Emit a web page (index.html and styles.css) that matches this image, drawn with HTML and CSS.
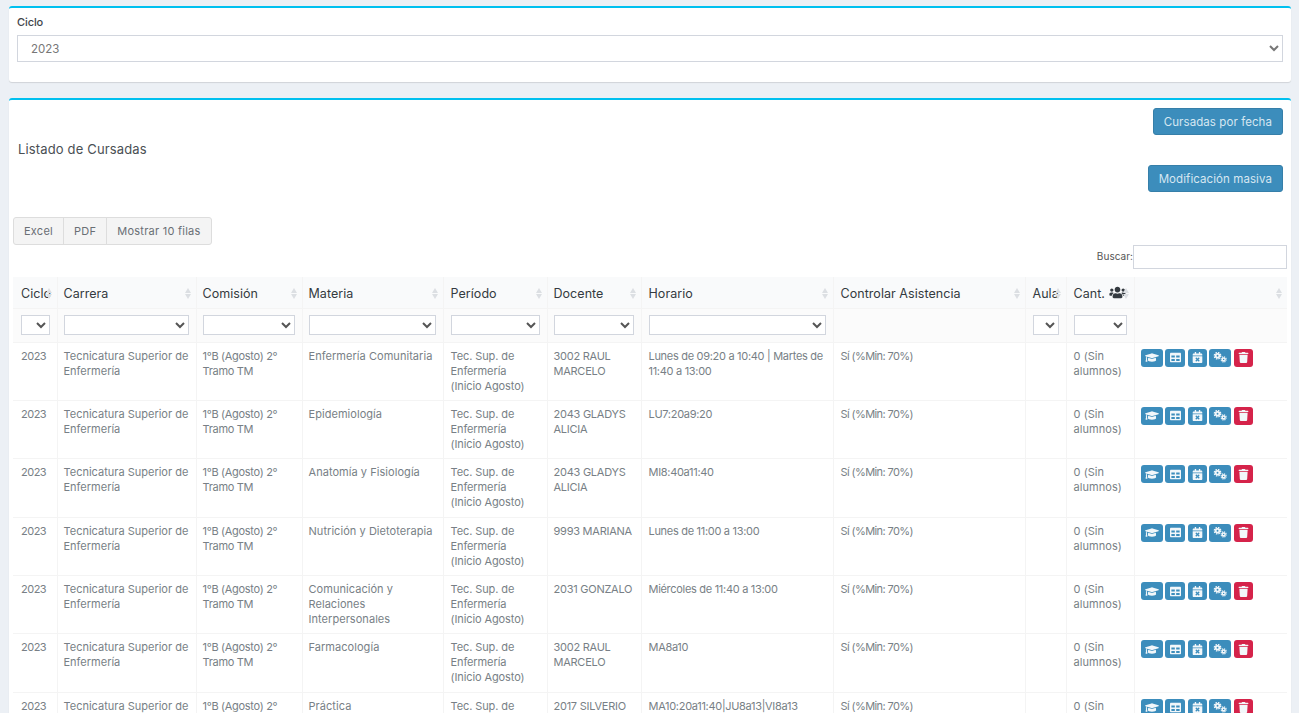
FILE: index.html
```html
<!DOCTYPE html>
<html lang="es">
<head>
<meta charset="utf-8">
<title>Listado de Cursadas</title>
<link rel="stylesheet" href="styles.css">
</head>
<body>
<svg class="defs" width="0" height="0" aria-hidden="true">
  <symbol id="i-cap" viewBox="0 0 640 512"><path d="M622.34 153.2L343.4 67.5c-15.2-4.67-31.6-4.67-46.79 0L17.66 153.2c-23.54 7.23-23.54 38.36 0 45.59l48.63 14.94c-10.67 13.19-17.23 29.28-17.88 46.9C38.78 266.15 32 276.11 32 288c0 10.78 5.68 19.85 13.86 25.65L20.33 428.53C18.11 438.52 25.71 448 35.94 448h56.11c10.24 0 17.84-9.48 15.62-19.47L82.14 313.65C90.32 307.85 96 298.78 96 288c0-11.57-6.47-21.25-15.66-26.87.76-15.02 8.44-28.3 20.69-36.72L296.6 284.5c9.06 2.78 26.44 6.25 46.79 0l278.95-85.7c23.55-7.24 23.55-38.36 0-45.6zM352.79 315.09c-28.53 8.76-52.84 3.92-65.59 0l-145.02-44.55L128 384c0 35.35 85.96 64 192 64s192-28.65 192-64l-14.18-113.47-145.03 44.56z"/></symbol>
  <symbol id="i-table" viewBox="0 0 512 512"><path d="M464 32H48C21.49 32 0 53.49 0 80v352c0 26.51 21.49 48 48 48h416c26.51 0 48-21.49 48-48V80c0-26.51-21.49-48-48-48zM224 416H64v-96h160v96zm0-160H64v-96h160v96zm224 160H288v-96h160v96zm0-160H288v-96h160v96z"/></symbol>
  <symbol id="i-cal" viewBox="0 0 448 512"><path d="M436 160H12c-6.6 0-12-5.4-12-12v-36c0-26.5 21.5-48 48-48h48V12c0-6.6 5.4-12 12-12h40c6.6 0 12 5.4 12 12v52h128V12c0-6.6 5.4-12 12-12h40c6.6 0 12 5.4 12 12v52h48c26.5 0 48 21.5 48 48v36c0 6.6-5.4 12-12 12zM12 192h424c6.6 0 12 5.4 12 12v260c0 26.5-21.5 48-48 48H48c-26.5 0-48-21.5-48-48V204c0-6.6 5.4-12 12-12zm257.3 160l48.1-48.1c4.7-4.7 4.7-12.3 0-17l-28.3-28.3c-4.7-4.7-12.3-4.7-17 0L224 306.7l-48.1-48.1c-4.7-4.7-12.3-4.7-17 0l-28.3 28.3c-4.7 4.7-4.7 12.3 0 17l48.1 48.1-48.1 48.1c-4.7 4.7-4.7 12.3 0 17l28.3 28.3c4.7 4.7 12.3 4.7 17 0l48.1-48.1 48.1 48.1c4.7 4.7 12.3 4.7 17 0l28.3-28.3c4.7-4.7 4.7-12.3 0-17L269.3 352z"/></symbol>
  <symbol id="i-cogs" viewBox="0 0 640 512"><g fill="none" stroke="currentColor"><circle cx="205" cy="175" r="85" stroke-width="85"/><circle cx="205" cy="175" r="150" stroke-width="60" stroke-dasharray="70 48"/><circle cx="490" cy="345" r="68" stroke-width="70"/><circle cx="490" cy="345" r="120" stroke-width="50" stroke-dasharray="55 39"/></g></symbol>
  <symbol id="i-trash" viewBox="0 0 448 512"><path d="M432 32H312l-9.4-18.7A24 24 0 0 0 281.1 0H166.8a23.72 23.72 0 0 0-21.4 13.3L136 32H16A16 16 0 0 0 0 48v32a16 16 0 0 0 16 16h416a16 16 0 0 0 16-16V48a16 16 0 0 0-16-16zM53.2 467a48 48 0 0 0 47.9 45h245.8a48 48 0 0 0 47.9-45L416 128H32z"/></symbol>
  <symbol id="i-users" viewBox="0 0 640 512"><path d="M96 224c35.3 0 64-28.7 64-64s-28.7-64-64-64-64 28.7-64 64 28.7 64 64 64zm448 0c35.3 0 64-28.7 64-64s-28.7-64-64-64-64 28.7-64 64 28.7 64 64 64zm32 32h-64c-17.6 0-33.5 7.1-45.1 18.6 40.3 22.1 68.9 62 75.1 109.4h66c17.7 0 32-14.3 32-32v-32c0-35.3-28.7-64-64-64zm-256 0c61.9 0 112-50.1 112-112S381.9 32 320 32 208 82.1 208 144s50.1 112 112 112zm76.8 32h-8.3c-20.8 10-43.9 16-68.5 16s-47.6-6-68.5-16h-8.3C179.6 288 128 339.6 128 403.2V432c0 26.5 21.5 48 48 48h288c26.5 0 48-21.5 48-48v-28.8c0-63.6-51.6-115.2-115.2-115.2zm-223.7-13.4C161.5 263.1 145.6 256 128 256H64c-35.3 0-64 28.7-64 64v32c0 17.7 14.3 32 32 32h65.9c6.3-47.4 34.9-87.3 75.2-109.4z"/></symbol>
</svg>

<main class="content">
  <section class="card card-filter">
    <label class="field-label" for="ciclo">Ciclo</label>
    <select id="ciclo" class="field-select"><option>2023</option></select>
  </section>

  <section class="card card-list">
    <div class="toolbar-row toolbar-first"><button class="btn-primary">Cursadas por fecha</button></div>
    <h3 class="list-title">Listado de Cursadas</h3>
    <div class="toolbar-row toolbar-second"><button class="btn-primary">Modificación masiva</button></div>

    <div class="dt-buttons">
      <button class="dt-btn">Excel</button><button class="dt-btn">PDF</button><button class="dt-btn">Mostrar 10 filas</button>
    </div>
    <div class="dt-search"><label class="search-label" for="buscar">Buscar:</label><input id="buscar" class="search-input" type="search"></div>

    <table class="grid">
      <colgroup>
        <col class="c-ciclo"><col class="c-carrera"><col class="c-comision"><col class="c-materia"><col class="c-periodo"><col class="c-docente"><col class="c-horario"><col class="c-control"><col class="c-aula"><col class="c-cant"><col class="c-acc">
      </colgroup>
      <thead>
        <tr class="head-row">
          <th class="sort">Ciclo</th><th class="sort">Carrera</th><th class="sort">Comisión</th><th class="sort">Materia</th><th class="sort">Período</th><th class="sort">Docente</th><th class="sort">Horario</th><th class="sort">Controlar Asistencia</th><th class="sort">Aula</th>
          <th class="sort">Cant. <svg class="users"><use href="#i-users"/></svg></th><th class="sort"></th>
        </tr>
        <tr class="filter-row">
          <th><select class="f-sel"></select></th><th><select class="f-sel"></select></th><th><select class="f-sel"></select></th><th><select class="f-sel"></select></th><th><select class="f-sel"></select></th><th><select class="f-sel"></select></th><th><select class="f-sel"></select></th><th></th><th><select class="f-sel"></select></th><th><select class="f-sel"></select></th><th></th>
        </tr>
      </thead>
      <tbody id="rows">
        <tr><td>2023</td><td>Tecnicatura Superior de Enfermería</td><td>1°B (Agosto) 2° Tramo TM</td><td>Enfermería Comunitaria</td><td>Tec. Sup. de Enfermería (Inicio Agosto)</td><td>3002 RAUL MARCELO</td><td>Lunes de 09:20 a 10:40 | Martes de 11:40 a 13:00</td><td>Sí (%Min: 70%)</td><td></td><td>0 (Sin alumnos)</td>
          <td class="acts"><a class="ab ab-cap"><svg><use href="#i-cap"/></svg></a><a class="ab ab-tab"><svg><use href="#i-table"/></svg></a><a class="ab ab-cal"><svg><use href="#i-cal"/></svg></a><a class="ab ab-cog"><svg><use href="#i-cogs"/></svg></a><a class="ab ab-del"><svg><use href="#i-trash"/></svg></a></td></tr>
        <tr><td>2023</td><td>Tecnicatura Superior de Enfermería</td><td>1°B (Agosto) 2° Tramo TM</td><td>Epidemiología</td><td>Tec. Sup. de Enfermería (Inicio Agosto)</td><td>2043 GLADYS ALICIA</td><td>LU7:20a9:20</td><td>Sí (%Min: 70%)</td><td></td><td>0 (Sin alumnos)</td>
          <td class="acts"><a class="ab ab-cap"><svg><use href="#i-cap"/></svg></a><a class="ab ab-tab"><svg><use href="#i-table"/></svg></a><a class="ab ab-cal"><svg><use href="#i-cal"/></svg></a><a class="ab ab-cog"><svg><use href="#i-cogs"/></svg></a><a class="ab ab-del"><svg><use href="#i-trash"/></svg></a></td></tr>
        <tr><td>2023</td><td>Tecnicatura Superior de Enfermería</td><td>1°B (Agosto) 2° Tramo TM</td><td>Anatomía y Fisiología</td><td>Tec. Sup. de Enfermería (Inicio Agosto)</td><td>2043 GLADYS ALICIA</td><td>MI8:40a11:40</td><td>Sí (%Min: 70%)</td><td></td><td>0 (Sin alumnos)</td>
          <td class="acts"><a class="ab ab-cap"><svg><use href="#i-cap"/></svg></a><a class="ab ab-tab"><svg><use href="#i-table"/></svg></a><a class="ab ab-cal"><svg><use href="#i-cal"/></svg></a><a class="ab ab-cog"><svg><use href="#i-cogs"/></svg></a><a class="ab ab-del"><svg><use href="#i-trash"/></svg></a></td></tr>
        <tr><td>2023</td><td>Tecnicatura Superior de Enfermería</td><td>1°B (Agosto) 2° Tramo TM</td><td>Nutrición y Dietoterapia</td><td>Tec. Sup. de Enfermería (Inicio Agosto)</td><td>9993 MARIANA</td><td>Lunes de 11:00 a 13:00</td><td>Sí (%Min: 70%)</td><td></td><td>0 (Sin alumnos)</td>
          <td class="acts"><a class="ab ab-cap"><svg><use href="#i-cap"/></svg></a><a class="ab ab-tab"><svg><use href="#i-table"/></svg></a><a class="ab ab-cal"><svg><use href="#i-cal"/></svg></a><a class="ab ab-cog"><svg><use href="#i-cogs"/></svg></a><a class="ab ab-del"><svg><use href="#i-trash"/></svg></a></td></tr>
        <tr><td>2023</td><td>Tecnicatura Superior de Enfermería</td><td>1°B (Agosto) 2° Tramo TM</td><td>Comunicación y Relaciones Interpersonales</td><td>Tec. Sup. de Enfermería (Inicio Agosto)</td><td>2031 GONZALO</td><td>Miércoles de 11:40 a 13:00</td><td>Sí (%Min: 70%)</td><td></td><td>0 (Sin alumnos)</td>
          <td class="acts"><a class="ab ab-cap"><svg><use href="#i-cap"/></svg></a><a class="ab ab-tab"><svg><use href="#i-table"/></svg></a><a class="ab ab-cal"><svg><use href="#i-cal"/></svg></a><a class="ab ab-cog"><svg><use href="#i-cogs"/></svg></a><a class="ab ab-del"><svg><use href="#i-trash"/></svg></a></td></tr>
        <tr><td>2023</td><td>Tecnicatura Superior de Enfermería</td><td>1°B (Agosto) 2° Tramo TM</td><td>Farmacología</td><td>Tec. Sup. de Enfermería (Inicio Agosto)</td><td>3002 RAUL MARCELO</td><td>MA8a10</td><td>Sí (%Min: 70%)</td><td></td><td>0 (Sin alumnos)</td>
          <td class="acts"><a class="ab ab-cap"><svg><use href="#i-cap"/></svg></a><a class="ab ab-tab"><svg><use href="#i-table"/></svg></a><a class="ab ab-cal"><svg><use href="#i-cal"/></svg></a><a class="ab ab-cog"><svg><use href="#i-cogs"/></svg></a><a class="ab ab-del"><svg><use href="#i-trash"/></svg></a></td></tr>
        <tr><td>2023</td><td>Tecnicatura Superior de Enfermería</td><td>1°B (Agosto) 2° Tramo TM</td><td>Práctica</td><td>Tec. Sup. de Enfermería (Inicio Agosto)</td><td>2017 SILVERIO</td><td>MA10:20a11:40|JU8a13|VI8a13</td><td>Sí (%Min: 70%)</td><td></td><td>0 (Sin alumnos)</td>
          <td class="acts"><a class="ab ab-cap"><svg><use href="#i-cap"/></svg></a><a class="ab ab-tab"><svg><use href="#i-table"/></svg></a><a class="ab ab-cal"><svg><use href="#i-cal"/></svg></a><a class="ab ab-cog"><svg><use href="#i-cogs"/></svg></a><a class="ab ab-del"><svg><use href="#i-trash"/></svg></a></td></tr>
      </tbody>
    </table>
  </section>
</main>
</body>
</html>
```
FILE: styles.css
```css
* { box-sizing: border-box; }
html, body { height: 100%; margin: 0; overflow: hidden; }
body {
  background: #ecf0f5;
  color: #787f86;
  font-family: Inter, "Noto Sans", "Liberation Sans", sans-serif;
  font-size: 11px;
  letter-spacing: 0.05px;
}
.defs { position: absolute; }
.content { padding: 6px 8px 0 9px; }

.card {
  background: #fff;
  border-top: 2px solid #00c0ef;
  border-radius: 3px;
  box-shadow: 0 1px 1px rgba(0,0,0,.12);
}
.card-filter { height: 76px; padding: 7px 8px 0; margin-bottom: 16px; }
.field-label { display: block; height: 20px; font-size: 11px; font-weight: 500; color: #3f454b; line-height: 14px; letter-spacing: -.1px; }
.field-select {
  display: block;
  width: 100%;
  height: 27px;
  padding: 0 9px;
  border: 1px solid #d2d6de;
  background: #fff;
  color: #777;
  font: inherit;
  font-size: 11.5px;
}

.card-list { padding: 8px 4px 0; height: 800px; }
.toolbar-row { display: flex; justify-content: flex-end; padding-right: 4px; }
.toolbar-first { height: 27px; }
.toolbar-second { height: 28px; }
.btn-primary {
  height: 27px;
  padding: 0 10px;
  background: #3c8dbc;
  border: 1px solid #367fa9;
  border-radius: 3px;
  color: #d6e7f1;
  font: inherit;
  font-size: 11.5px;
  letter-spacing: .08px;
}
.list-title { margin: 6px 0 0 5px; height: 24px; font-size: 13px; font-weight: 400; line-height: 16px; color: #4a4f54; letter-spacing: .15px; }
.dt-buttons { display: flex; margin-top: 24px; height: 28px; }
.dt-btn {
  height: 28px;
  padding: 0 10px;
  background: #f4f4f4;
  border: 1px solid #ddd;
  margin-left: -1px;
  color: #6a6f74;
  font: inherit;
  font-size: 11px;
  letter-spacing: .25px;
}
.dt-btn:first-child { margin-left: 0; border-radius: 3px 0 0 3px; }
.dt-btn:last-child { border-radius: 0 3px 3px 0; }
.dt-search { display: flex; justify-content: flex-end; align-items: center; height: 24px; color: #555; font-size: 10px; }
.search-label { margin-bottom: 2px; }
.search-input { width: 154px; height: 24px; padding: 0 4px; border: 1px solid #d2d6de; background: #fff; }

.grid { width: 1274px; margin-top: 8px; border-collapse: collapse; table-layout: fixed; }
.c-ciclo { width: 44px; } .c-carrera { width: 139px; } .c-comision { width: 106px; }
.c-materia { width: 141px; } .c-periodo { width: 104px; } .c-docente { width: 94px; }
.c-horario { width: 192px; } .c-control { width: 192px; } .c-aula { width: 41px; }
.c-cant { width: 68px; } .c-acc { width: 153px; }

.grid th, .grid td { border: 1px solid #f4f4f4; }
.grid tr > :first-child { border-left: 0; padding-left: 8px; }
.grid tr > :last-child { border-right: 0; }
.head-row th {
  position: relative;
  height: 31px;
  padding: 3px 7px 0;
  background: #f9fafb;
  color: #343a40;
  font-size: 12.5px;
  font-weight: 400;
  text-align: left;
  white-space: nowrap;
  border-top: 0;
}
.grid tr > :nth-child(2), .grid tr > :nth-child(3), .grid tr > :nth-child(4), .grid tr > :nth-child(6) { padding-left: 6px; }
.sort::before, .sort::after {
  content: "";
  position: absolute;
  right: 5px;
  border-left: 3px solid transparent;
  border-right: 3px solid transparent;
}
.sort::before { top: 11px; border-bottom: 5px solid #dcdfe3; }
.sort::after { top: 17px; border-top: 5px solid #dcdfe3; }
.users { width: 17px; height: 13px; vertical-align: -1px; fill: #343a40; }
.filter-row th { height: 34px; padding: 0 7px; background: #fbfbfb; }
.f-sel {
  display: block;
  width: 100%;
  height: 20px;
  border: 1px solid #d2d6de;
  background: #fff;
  color: #555;
  font: inherit;
}
.grid td {
  height: 58.4px;
  padding: 6px 7px;
  vertical-align: top;
  line-height: 15px;
  overflow: hidden;
}
.grid td:nth-child(1) { letter-spacing: -.5px; }
.grid td:nth-child(2) { padding-right: 1px; letter-spacing: 0; }
.grid td:nth-child(3) { letter-spacing: -.3px; }
.grid td:nth-child(5) { letter-spacing: -.1px; }
.grid td:nth-child(6) { letter-spacing: -.25px; padding-right: 4px; }
.grid td:nth-child(7) { letter-spacing: -.3px; }
.grid td:nth-child(8) { letter-spacing: -.6px; }
.grid td.acts { padding: 6px 6px; white-space: nowrap; }
.ab {
  display: inline-flex;
  align-items: center;
  justify-content: center;
  height: 18px;
  margin-right: 2.5px;
  border-radius: 3px;
  background: #3c8dbc;
  color: #f2f7fa;
  vertical-align: top;
}
.ab svg { fill: currentColor; width: 11px; height: 11px; }
.ab-cap { width: 22px; } .ab-tab { width: 20px; } .ab-cal { width: 19px; } .ab-cog { width: 22px; }
.ab-cap svg { width: 14px; }
.ab-cog svg { width: 14px; }
.ab-del { width: 19px; background: #d5234a; margin-right: 0; }
```
